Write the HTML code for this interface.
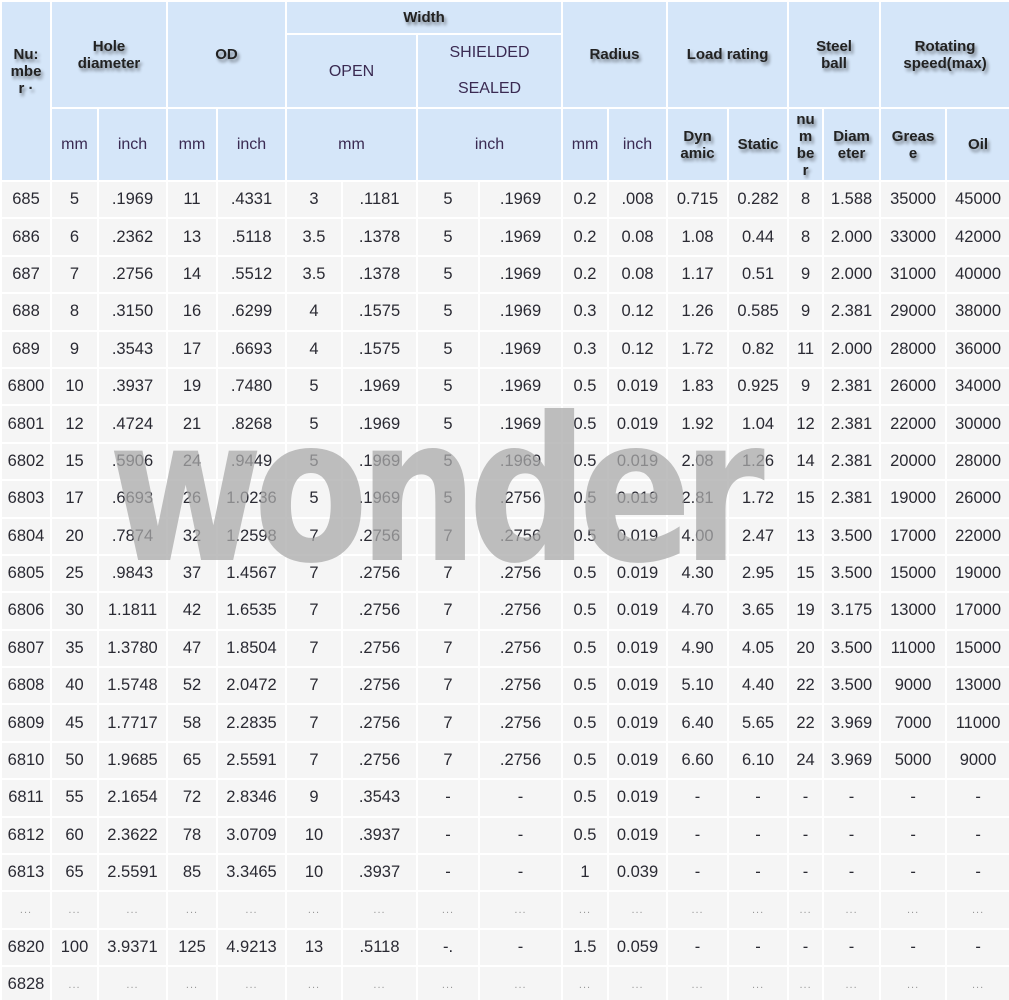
<!DOCTYPE html>
<html><head><meta charset="utf-8"><style>
html,body{margin:0;padding:0;background:#fff;width:1009px;height:1000px;overflow:hidden;position:relative}
table{border-collapse:collapse;table-layout:fixed;width:1009px;font-family:"Liberation Sans",Arial,sans-serif;}
td{border:2px solid #fff;padding:0;text-align:center;overflow:hidden;white-space:nowrap}
.h td{background:#d5e6f9;color:#222;font-weight:bold;font-size:15px;text-shadow:2px 3px 3px rgba(0,0,0,.45);white-space:normal;line-height:17px}
.h td.n{font-weight:normal;text-shadow:none;color:#3a2a52;font-size:16px}
.d td{background:#f5f5f5;color:#2a2a33;font-size:16.5px;height:35.4px}
.d td.e{color:#999;font-size:11px;letter-spacing:1px}
#wm{position:absolute;left:108px;top:392px;font-family:"DejaVu Sans","Liberation Sans",sans-serif;font-weight:bold;font-size:200px;line-height:200px;color:rgba(170,170,170,.75);letter-spacing:-12px;transform:scaleX(.84);transform-origin:left top;pointer-events:none}
</style></head><body>
<table>
<colgroup><col style="width:50px"><col style="width:47px"><col style="width:69px"><col style="width:50px"><col style="width:69px"><col style="width:56px"><col style="width:75px"><col style="width:62px"><col style="width:83px"><col style="width:46px"><col style="width:59px"><col style="width:61px"><col style="width:60px"><col style="width:35px"><col style="width:57px"><col style="width:66px"><col style="width:64px"></colgroup>
<tr class="h" style="height:33px"><td rowspan="3" style="vertical-align:middle;padding-bottom:40px">Nu:<br>mbe<br>r ·</td><td colspan="2" rowspan="2">Hole<br>diameter</td><td colspan="2" rowspan="2">OD</td><td colspan="4">Width</td><td colspan="2" rowspan="2">Radius</td><td colspan="2" rowspan="2">Load rating</td><td colspan="2" rowspan="2">Steel<br>ball</td><td colspan="2" rowspan="2">Rotating<br>speed(max)</td></tr>
<tr class="h" style="height:74px"><td class="n" colspan="2">OPEN</td><td class="n" colspan="2" style="line-height:36px">SHIELDED<br>SEALED</td></tr>
<tr class="h" style="height:73px"><td class="n">mm</td><td class="n">inch</td><td class="n">mm</td><td class="n">inch</td><td class="n" colspan="2">mm</td><td class="n" colspan="2">inch</td><td class="n">mm</td><td class="n">inch</td><td>Dyn<br>amic</td><td>Static</td><td>nu<br>m<br>be<br>r</td><td>Diam<br>eter</td><td>Greas<br>e</td><td>Oil</td></tr>
<tr class="d"><td>685</td><td>5</td><td>.1969</td><td>11</td><td>.4331</td><td>3</td><td>.1181</td><td>5</td><td>.1969</td><td>0.2</td><td>.008</td><td>0.715</td><td>0.282</td><td>8</td><td>1.588</td><td>35000</td><td>45000</td></tr>
<tr class="d"><td>686</td><td>6</td><td>.2362</td><td>13</td><td>.5118</td><td>3.5</td><td>.1378</td><td>5</td><td>.1969</td><td>0.2</td><td>0.08</td><td>1.08</td><td>0.44</td><td>8</td><td>2.000</td><td>33000</td><td>42000</td></tr>
<tr class="d"><td>687</td><td>7</td><td>.2756</td><td>14</td><td>.5512</td><td>3.5</td><td>.1378</td><td>5</td><td>.1969</td><td>0.2</td><td>0.08</td><td>1.17</td><td>0.51</td><td>9</td><td>2.000</td><td>31000</td><td>40000</td></tr>
<tr class="d"><td>688</td><td>8</td><td>.3150</td><td>16</td><td>.6299</td><td>4</td><td>.1575</td><td>5</td><td>.1969</td><td>0.3</td><td>0.12</td><td>1.26</td><td>0.585</td><td>9</td><td>2.381</td><td>29000</td><td>38000</td></tr>
<tr class="d"><td>689</td><td>9</td><td>.3543</td><td>17</td><td>.6693</td><td>4</td><td>.1575</td><td>5</td><td>.1969</td><td>0.3</td><td>0.12</td><td>1.72</td><td>0.82</td><td>11</td><td>2.000</td><td>28000</td><td>36000</td></tr>
<tr class="d"><td>6800</td><td>10</td><td>.3937</td><td>19</td><td>.7480</td><td>5</td><td>.1969</td><td>5</td><td>.1969</td><td>0.5</td><td>0.019</td><td>1.83</td><td>0.925</td><td>9</td><td>2.381</td><td>26000</td><td>34000</td></tr>
<tr class="d"><td>6801</td><td>12</td><td>.4724</td><td>21</td><td>.8268</td><td>5</td><td>.1969</td><td>5</td><td>.1969</td><td>0.5</td><td>0.019</td><td>1.92</td><td>1.04</td><td>12</td><td>2.381</td><td>22000</td><td>30000</td></tr>
<tr class="d"><td>6802</td><td>15</td><td>.5906</td><td>24</td><td>.9449</td><td>5</td><td>.1969</td><td>5</td><td>.1969</td><td>0.5</td><td>0.019</td><td>2.08</td><td>1.26</td><td>14</td><td>2.381</td><td>20000</td><td>28000</td></tr>
<tr class="d"><td>6803</td><td>17</td><td>.6693</td><td>26</td><td>1.0236</td><td>5</td><td>.1969</td><td>5</td><td>.2756</td><td>0.5</td><td>0.019</td><td>2.81</td><td>1.72</td><td>15</td><td>2.381</td><td>19000</td><td>26000</td></tr>
<tr class="d"><td>6804</td><td>20</td><td>.7874</td><td>32</td><td>1.2598</td><td>7</td><td>.2756</td><td>7</td><td>.2756</td><td>0.5</td><td>0.019</td><td>4.00</td><td>2.47</td><td>13</td><td>3.500</td><td>17000</td><td>22000</td></tr>
<tr class="d"><td>6805</td><td>25</td><td>.9843</td><td>37</td><td>1.4567</td><td>7</td><td>.2756</td><td>7</td><td>.2756</td><td>0.5</td><td>0.019</td><td>4.30</td><td>2.95</td><td>15</td><td>3.500</td><td>15000</td><td>19000</td></tr>
<tr class="d"><td>6806</td><td>30</td><td>1.1811</td><td>42</td><td>1.6535</td><td>7</td><td>.2756</td><td>7</td><td>.2756</td><td>0.5</td><td>0.019</td><td>4.70</td><td>3.65</td><td>19</td><td>3.175</td><td>13000</td><td>17000</td></tr>
<tr class="d"><td>6807</td><td>35</td><td>1.3780</td><td>47</td><td>1.8504</td><td>7</td><td>.2756</td><td>7</td><td>.2756</td><td>0.5</td><td>0.019</td><td>4.90</td><td>4.05</td><td>20</td><td>3.500</td><td>11000</td><td>15000</td></tr>
<tr class="d"><td>6808</td><td>40</td><td>1.5748</td><td>52</td><td>2.0472</td><td>7</td><td>.2756</td><td>7</td><td>.2756</td><td>0.5</td><td>0.019</td><td>5.10</td><td>4.40</td><td>22</td><td>3.500</td><td>9000</td><td>13000</td></tr>
<tr class="d"><td>6809</td><td>45</td><td>1.7717</td><td>58</td><td>2.2835</td><td>7</td><td>.2756</td><td>7</td><td>.2756</td><td>0.5</td><td>0.019</td><td>6.40</td><td>5.65</td><td>22</td><td>3.969</td><td>7000</td><td>11000</td></tr>
<tr class="d"><td>6810</td><td>50</td><td>1.9685</td><td>65</td><td>2.5591</td><td>7</td><td>.2756</td><td>7</td><td>.2756</td><td>0.5</td><td>0.019</td><td>6.60</td><td>6.10</td><td>24</td><td>3.969</td><td>5000</td><td>9000</td></tr>
<tr class="d"><td>6811</td><td>55</td><td>2.1654</td><td>72</td><td>2.8346</td><td>9</td><td>.3543</td><td>-</td><td>-</td><td>0.5</td><td>0.019</td><td>-</td><td>-</td><td>-</td><td>-</td><td>-</td><td>-</td></tr>
<tr class="d"><td>6812</td><td>60</td><td>2.3622</td><td>78</td><td>3.0709</td><td>10</td><td>.3937</td><td>-</td><td>-</td><td>0.5</td><td>0.019</td><td>-</td><td>-</td><td>-</td><td>-</td><td>-</td><td>-</td></tr>
<tr class="d"><td>6813</td><td>65</td><td>2.5591</td><td>85</td><td>3.3465</td><td>10</td><td>.3937</td><td>-</td><td>-</td><td>1</td><td>0.039</td><td>-</td><td>-</td><td>-</td><td>-</td><td>-</td><td>-</td></tr>
<tr class="d"><td class="e">...</td><td class="e">...</td><td class="e">...</td><td class="e">...</td><td class="e">...</td><td class="e">...</td><td class="e">...</td><td class="e">...</td><td class="e">...</td><td class="e">...</td><td class="e">...</td><td class="e">...</td><td class="e">...</td><td class="e">...</td><td class="e">...</td><td class="e">...</td><td class="e">...</td></tr>
<tr class="d"><td>6820</td><td>100</td><td>3.9371</td><td>125</td><td>4.9213</td><td>13</td><td>.5118</td><td>-.</td><td>-</td><td>1.5</td><td>0.059</td><td>-</td><td>-</td><td>-</td><td>-</td><td>-</td><td>-</td></tr>
<tr class="d"><td>6828</td><td class="e">...</td><td class="e">...</td><td class="e">...</td><td class="e">...</td><td class="e">...</td><td class="e">...</td><td class="e">...</td><td class="e">...</td><td class="e">...</td><td class="e">...</td><td class="e">...</td><td class="e">...</td><td class="e">...</td><td class="e">...</td><td class="e">...</td><td class="e">...</td></tr>
</table>
<div id="wm">wonder</div>
</body></html>
